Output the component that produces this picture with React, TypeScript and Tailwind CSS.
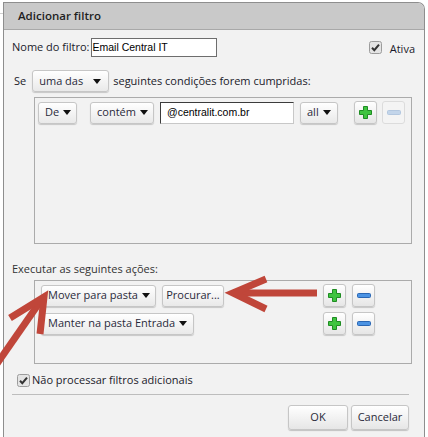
import React from "react";

const ui = { fontFamily: '"Open Sans", "DejaVu Sans", sans-serif' };
const arial = { fontFamily: '"Liberation Sans", Arial, sans-serif' };

function Caret() {
  return (
    <svg width="8" height="5" viewBox="0 0 8 5" className="shrink-0">
      <path d="M0 0 H8 L4 5 Z" fill="#111" />
    </svg>
  );
}

function Select({ label, w }: { label: string; w: string }) {
  return (
    <div
      className={`${w} h-[22px] shrink-0 flex items-center justify-between pl-[6px] pr-[7px] gap-1 rounded-[3px] border border-[#c6c6c6] bg-gradient-to-b from-white to-[#e9e9e9] shadow-[0_1px_1px_rgba(0,0,0,0.18)] text-[11px] text-[#2a2a3a]`}
    >
      <span className="whitespace-nowrap">{label}</span>
      <Caret />
    </div>
  );
}

function Plus() {
  return (
    <div className="w-[23px] h-[23px] flex items-center justify-center rounded-[3px] border border-[#c6c6c6] bg-gradient-to-b from-white to-[#e6e6e6] shadow-[0_1px_1px_rgba(0,0,0,0.18)]">
      <svg width="13" height="13" viewBox="0 0 13 13">
        <path
          d="M4.5 0.5 H8.5 V4.5 H12.5 V8.5 H8.5 V12.5 H4.5 V8.5 H0.5 V4.5 H4.5 Z"
          fill="#3fc43f"
          stroke="#1f8c23"
          strokeWidth="1"
        />
      </svg>
    </div>
  );
}

function Minus({ disabled }: { disabled?: boolean }) {
  return (
    <div
      className={`w-[23px] h-[23px] flex items-center justify-center rounded-[3px] border ${
        disabled ? "border-[#dcdcdc] bg-[#f4f4f4]" : "border-[#c6c6c6] bg-gradient-to-b from-white to-[#e6e6e6] shadow-[0_1px_1px_rgba(0,0,0,0.18)]"
      }`}
    >
      <svg width="14" height="5" viewBox="0 0 14 5">
        <rect
          x="0.5"
          y="0.5"
          width="13"
          height="4"
          rx="1"
          fill={disabled ? "#c3d5ea" : "#4b93e3"}
          stroke={disabled ? "#b3c7df" : "#2a66b3"}
        />
      </svg>
    </div>
  );
}

function Check() {
  return (
    <svg width="13" height="13" viewBox="0 0 13 13" className="shrink-0">
      <rect x="0.5" y="0.5" width="12" height="12" rx="2" fill="#e4e4e4" stroke="#9c9c9c" />
      <path d="M3 6.8 L5.3 9.2 L10 3.6" fill="none" stroke="#333" strokeWidth="2" />
    </svg>
  );
}

export default function App() {
  return (
    <div className="relative w-[428px] h-[437px] bg-white overflow-hidden" style={ui}>
      <div className="absolute left-0 top-[13px] w-[3px] h-px bg-[#cfcfcf]" />
      <div className="ml-[3px] mt-[2px] w-[422px] h-[440px] flex flex-col rounded-tr-[7px] border-l border-r border-t border-[#8e8e8e] bg-[#f2f2f2] overflow-hidden">
        {/* header */}
        <div className="h-[27px] shrink-0 flex items-center pl-[14px] bg-[#c9c9c9] border-b border-[#a8a8a8] text-[11.5px] font-semibold text-[#1e1e1e]">
          Adicionar filtro
        </div>

        {/* nome */}
        <div className="mt-[8px] h-[19px] shrink-0 flex items-center pl-[8px] pr-[9px] text-[11px] text-[#1a1a2a]">
          <span>Nome do filtro:</span>
          <div
            className="ml-px w-[126px] h-[19px] border border-[#6d6d6d] bg-white flex items-center px-px text-[10.5px] text-black"
            style={arial}
          >
            Email Central IT
          </div>
          <div className="ml-auto flex items-center gap-[8px]">
            <Check />
            <span className="pt-[3px]">Ativa</span>
          </div>
        </div>

        {/* se */}
        <div className="mt-[13px] h-[22px] shrink-0 flex items-center pl-[10px] text-[11px] text-[#1a1a2a]">
          <span className="mr-[6px]">Se</span>
          <Select label="uma das" w="w-[77px]" />
          <span className="ml-[4px]">seguintes condições forem cumpridas:</span>
        </div>

        {/* conditions */}
        <div className="ml-[30px] mt-[5px] w-[378px] h-[147px] shrink-0 border border-[#ababab] p-[3px]">
          <div className="flex items-center">
            <Select label="De" w="w-[39px]" />
            <div className="ml-[13px]">
              <Select label="contém" w="w-[64px]" />
            </div>
            <div
              className="ml-[6px] w-[134px] h-[22px] shrink-0 border border-[#c8c8c8] border-t-[#3c3c3c] border-l-[#3c3c3c] bg-white flex items-center px-[6px] text-[10.5px] text-black"
              style={arial}
            >
              @centralit.com.br
            </div>
            <div className="ml-[6px]">
              <Select label="all" w="w-[38px]" />
            </div>
            <div className="ml-[16px] flex gap-[5px]">
              <Plus />
              <Minus disabled />
            </div>
          </div>
        </div>

        {/* ações */}
        <div className="mt-[17px] h-[16px] shrink-0 leading-[16px] pl-[8px] text-[11px] text-[#333]">
          Executar as seguintes ações:
        </div>
        <div className="ml-[30px] mt-[3px] w-[378px] h-[84px] shrink-0 border border-[#ababab] pl-[6px] pt-[3px] flex flex-col gap-[5px]">
          <div className="flex items-center h-[23px]">
            <Select label="Mover para pasta" w="w-[115px]" />
            <div className="ml-[6px] w-[62px] h-[22px] flex items-center justify-center rounded-[3px] border border-[#c6c6c6] bg-gradient-to-b from-white to-[#e9e9e9] shadow-[0_1px_1px_rgba(0,0,0,0.18)] text-[11px] text-[#2a2a3a]">
              Procurar...
            </div>
            <div className="ml-[99px] flex gap-[6px]">
              <Plus />
              <Minus />
            </div>
          </div>
          <div className="flex items-center h-[23px]">
            <Select label="Manter na pasta Entrada" w="w-[153px]" />
            <div className="ml-[129px] flex gap-[6px]">
              <Plus />
              <Minus />
            </div>
          </div>
        </div>

        {/* não processar */}
        <div className="mt-[9px] h-[14px] shrink-0 pl-[13px] flex items-center gap-[2px] text-[11px] text-[#1a1a2a]">
          <Check />
          <span>Não processar filtros adicionais</span>
        </div>
        <div className="mt-[7px] ml-[8px] w-[397px] h-px shrink-0 bg-[#bdbdbd]" />

        <div className="mt-[10px] pr-[15px] flex justify-end gap-[3px] text-[11px] text-[#2a2a3a]">
          <div className="w-[60px] h-[25px] flex items-center justify-center rounded-[3px] border border-[#c6c6c6] bg-gradient-to-b from-white to-[#e6e6e6] shadow-[0_1px_1px_rgba(0,0,0,0.2)]">
            OK
          </div>
          <div className="w-[58px] h-[25px] flex items-center justify-center rounded-[3px] border border-[#c6c6c6] bg-gradient-to-b from-white to-[#e6e6e6] shadow-[0_1px_1px_rgba(0,0,0,0.2)]">
            Cancelar
          </div>
        </div>
      </div>

      {/* annotation arrows */}
      <svg className="absolute inset-0 pointer-events-none" width="428" height="437" viewBox="0 0 428 437">
        <g stroke="#c0463a" strokeWidth="7" fill="none" strokeLinejoin="miter">
          <path d="M317 293 H236" />
          <path d="M266 279 L233 293 L266 309" />
          <path d="M-6 368 L42 299" />
          <path d="M10 318 L44 297 L40 334" />
        </g>
      </svg>
    </div>
  );
}
